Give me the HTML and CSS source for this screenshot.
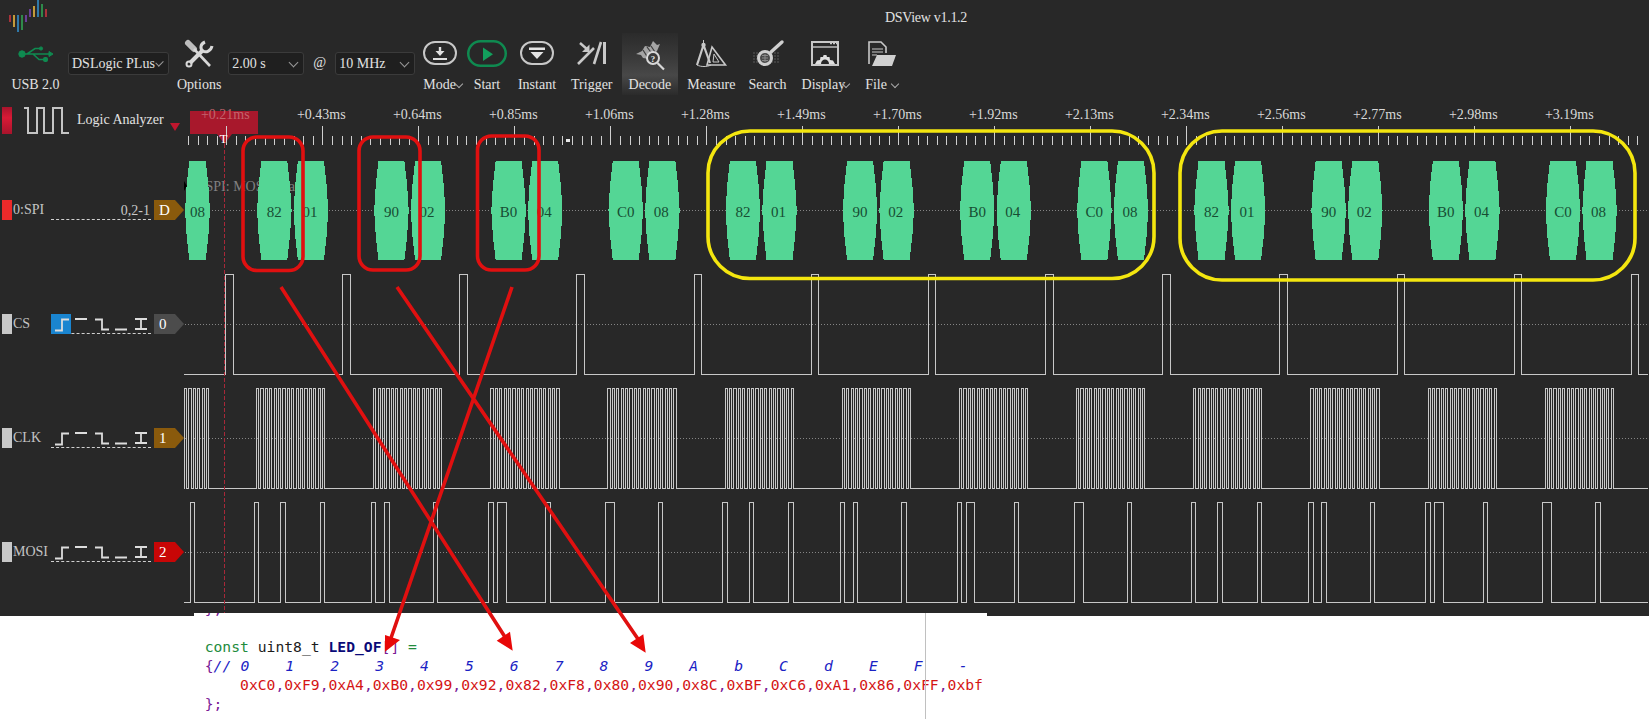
FILE: index.html
```html
<!DOCTYPE html>
<html lang="en">
<head>
	<meta charset="UTF-8">
	<title>DSView v1.1.2</title>
	<link rel="stylesheet" href="styles.css">
</head>
<body>
<svg width="0" height="0" class="defs">
	<symbol id="edges" viewBox="0 0 100 20">
		<path d="M4 16.5H11V5.5H18M24 5H36M44 5.5H51V15.5H58M64 15.5H76M84 5H96M90 5V15M84 15H96"/>
	</symbol>
</svg>

<div class="app">
	<div class="titlebar">
		<svg class="logo" width="40" height="33" viewBox="0 0 40 33">
			<rect x="0" y="15" width="2" height="7" fill="#a8323a"/>
			<rect x="4" y="15" width="2" height="12" fill="#c49a3a"/>
			<rect x="8" y="15" width="2" height="17" fill="#2f78a8"/>
			<rect x="12" y="15" width="2" height="15" fill="#2f8a4a"/>
			<rect x="16" y="15" width="2" height="7" fill="#6a3f98"/>
			<rect x="20" y="9" width="2" height="8" fill="#6a3f98"/>
			<rect x="24" y="6" width="2" height="11" fill="#c49a3a"/>
			<rect x="28" y="0" width="2" height="17" fill="#2f78a8"/>
			<rect x="32" y="4" width="2" height="13" fill="#2f8a4a"/>
			<rect x="36" y="9" width="2" height="8" fill="#a8323a"/>
		</svg>
		<div class="title">DSView v1.1.2</div>
	</div>

	<div class="toolbar">
		<div class="tool tool-usb">
			<svg class="icon" width="36" height="30" viewBox="0 0 36 30">
				<g fill="#0f8a50" stroke="#0f8a50">
					<circle cx="4" cy="14" r="3.2"/>
					<path d="M4 14H32M9 14L17 8.5H22M15 14L21 19.5H27" fill="none" stroke-width="1.6"/>
					<circle cx="23" cy="8.5" r="1.6"/>
					<rect x="25.5" y="17.5" width="4" height="4" rx="1"/>
					<path d="M31 11.5L35 14L31 16.5Z"/>
				</g>
			</svg>
			<span>USB 2.0</span>
		</div>
		<div class="combo combo-device">DSLogic PLus</div>
		<div class="tool tool-options">
			<svg class="icon" width="28" height="30" viewBox="0 0 28 30">
				<path d="M3 3L9 9" stroke="#bdbdbd" stroke-width="6" stroke-linecap="round" fill="none"/>
				<path d="M9 9L25 26" stroke="#d8d8d8" stroke-width="2.6" fill="none"/>
				<path d="M5 23L18 10" stroke="#d8d8d8" stroke-width="4" fill="none"/>
				<circle cx="4" cy="24" r="2.5" fill="none" stroke="#d8d8d8" stroke-width="2"/>
				<path d="M20 2C15 4 15 9 18 11C21 13 26 11 27 6" stroke="#d8d8d8" stroke-width="3" fill="none"/>
			</svg>
			<span>Options</span>
		</div>
		<div class="combo combo-time">2.00 s</div>
		<div class="at">@</div>
		<div class="combo combo-rate">10 MHz</div>

		<div class="tools">
			<div class="tool tool-mode">
				<svg class="icon" width="34" height="30" viewBox="0 0 34 30">
					<rect x="1" y="2" width="32" height="22" rx="11" fill="none" stroke="#c8c8c8" stroke-width="2"/>
					<path d="M17 7V13" stroke="#e0e0e0" stroke-width="2.4"/>
					<path d="M12.5 11H21.5L17 16Z M10 18H24V20H10Z" fill="#e0e0e0"/>
				</svg>
				<span class="more">Mode</span>
			</div>
			<div class="tool tool-start">
				<svg class="icon" width="40" height="30" viewBox="0 0 40 30">
					<rect x="1.25" y="1.25" width="37.5" height="24.5" rx="12.2" fill="none" stroke="#0f8a50" stroke-width="2.5"/>
					<path d="M16 7.5V21L26 14.2Z" fill="#12a05c"/>
				</svg>
				<span>Start</span>
			</div>
			<div class="tool tool-instant">
				<svg class="icon" width="34" height="30" viewBox="0 0 34 30">
					<rect x="1" y="2" width="32" height="22" rx="11" fill="none" stroke="#c8c8c8" stroke-width="2"/>
					<path d="M9 7.5H25V10H9Z M10.5 12H23.5L17 19Z" fill="#e4e4e4"/>
				</svg>
				<span>Instant</span>
			</div>
			<div class="tool tool-trigger">
				<svg class="icon" width="30" height="30" viewBox="0 0 30 30">
					<g stroke="#c8c8c8" fill="none">
						<path d="M3 3L11 10" stroke-width="2.4"/>
						<path d="M1 24L17 8M17 24L24 2" stroke-width="2.6"/>
						<path d="M27.5 2V24" stroke-width="3"/>
					</g>
					<path d="M12.5 4.5V12H5Z" fill="#c8c8c8"/>
				</svg>
				<span>Trigger</span>
			</div>
			<div class="tool tool-active">
				<svg class="icon" width="30" height="30" viewBox="0 0 30 30">
					<path d="M1 14L7 11L10 6L15 7L18 1L22 5L25 4L22 11L14 19L8 18L6 15Z" fill="#a4a4a4"/>
					<path d="M8 10L13 18M12 7L18 15M16 6L20 12" stroke="#3c3c3c" stroke-width="1.2" fill="none"/>
					<circle cx="18" cy="18" r="6" fill="#3a3a3a" stroke="#d8d8d8" stroke-width="2"/>
					<text x="18" y="21.5" class="icon-q">?</text>
					<path d="M22.5 23L29 29.5" stroke="#d8d8d8" stroke-width="2.2"/>
				</svg>
				<span>Decode</span>
			</div>
			<div class="tool">
				<svg class="icon" width="30" height="30" viewBox="0 0 30 30">
					<g fill="none" stroke="#c8c8c8">
						<path d="M16 7L29.5 25H11Z" stroke-width="1.6"/>
						<path d="M18 14L17 22H23Z" stroke-width="1"/>
						<path d="M7.5 5L1 25M7.5 5L14 23" stroke-width="2.2"/>
						<path d="M1 25C5 27 11 27 15 25" stroke-width="1"/>
					</g>
					<path d="M7.5 0V4" stroke="#c8c8c8"/>
					<circle cx="7.5" cy="5" r="2.2" fill="#c8c8c8"/>
				</svg>
				<span>Measure</span>
			</div>
			<div class="tool tool-search">
				<svg class="icon" width="32" height="30" viewBox="0 0 32 30">
					<path d="M1 13H28M1 16H28M1 19H28M1 22H28" stroke="#5a5a5a" stroke-dasharray="2 1"/>
					<circle cx="13" cy="18" r="6.5" fill="#4a4a4a" stroke="#d0d0d0" stroke-width="3"/>
					<path d="M10 15.5H16M10 18H16M10 20.5H16M13 14V22" stroke="#888"/>
					<path d="M19 12L30 2" stroke="#d0d0d0" stroke-width="3.4" stroke-linecap="round"/>
				</svg>
				<span>Search</span>
			</div>
			<div class="tool tool-display">
				<svg class="icon" width="30" height="30" viewBox="0 0 30 30">
					<rect x="2" y="2" width="26" height="23" fill="none" stroke="#c8c8c8" stroke-width="2"/>
					<path d="M2 7H28" stroke="#c8c8c8" stroke-width="1.4"/>
					<path d="M20 3.4H22M23 3.4H25M26 3.4H27" stroke="#c8c8c8" stroke-width="1.6"/>
					<path d="M5 24L7 20.5L10 20L10.5 17H13L13.6 15H16.4L17 17H19.5L20 20L23 20.5L25 24H19C19 18 11 18 11 24Z" fill="#e0e0e0"/>
				</svg>
				<span class="more more-tight">Display</span>
			</div>
			<div class="tool">
				<svg class="icon" width="30" height="30" viewBox="0 0 30 30">
					<path d="M2 24V2H14L19 7V13" fill="none" stroke="#c8c8c8" stroke-width="1.6"/>
					<path d="M5 9H16M5 12H16M5 15H10" stroke="#c8c8c8" stroke-width="1.2"/>
					<path d="M5 26L10 15L29 15L25 26Z" fill="#d0d0d0"/>
				</svg>
				<span class="more more-wide">File</span>
			</div>
		</div>
	</div>

	<div class="viewer">
		<div class="side">
			<div class="side-head">
				<div class="swatch swatch-head"></div>
				<svg class="mode-wave" width="46" height="28" viewBox="0 0 46 28">
					<path d="M0 1H4V26H13V1H20V26H29V1H38V26H45" fill="none" stroke="#c4c4c4" stroke-width="2"/>
				</svg>
				<div class="mode-name">Logic Analyzer</div>
				<div class="mode-arrow"></div>
			</div>

			<div class="row">
				<div class="swatch swatch-red"></div>
				<div class="name">0:SPI</div>
				<div class="trig trig-text">0,2-1</div>
				<div class="tag tag-brown">D</div>
			</div>
			<div class="row">
				<div class="swatch"></div>
				<div class="name">CS</div>
				<div class="trig">
					<div class="trig-on"></div>
					<svg class="edges"><use href="#edges"/></svg>
				</div>
				<div class="tag tag-gray">0</div>
			</div>
			<div class="row">
				<div class="swatch"></div>
				<div class="name">CLK</div>
				<div class="trig"><svg class="edges"><use href="#edges"/></svg></div>
				<div class="tag tag-brown">1</div>
			</div>
			<div class="row">
				<div class="swatch"></div>
				<div class="name">MOSI</div>
				<div class="trig"><svg class="edges"><use href="#edges"/></svg></div>
				<div class="tag tag-red">2</div>
			</div>
		</div>

		<svg id="scope" class="scope" width="1465" height="513" viewBox="184 100 1465 513"></svg>
	</div>
</div>

<div class="lower">
	<div class="snippet">
<pre class="code"><span class="op">};</span>

<span class="kw">const</span> uint8_t <b class="id">LED_OF</b><span class="op">[]</span> <span class="kw">=</span>
<span class="op">{</span><i class="cm">// 0    1    2    3    4    5    6    7    8    9    A    b    C    d    E    F    -</i>
    <span class="num">0xC0</span><span class="op">,</span><span class="num">0xF9</span><span class="op">,</span><span class="num">0xA4</span><span class="op">,</span><span class="num">0xB0</span><span class="op">,</span><span class="num">0x99</span><span class="op">,</span><span class="num">0x92</span><span class="op">,</span><span class="num">0x82</span><span class="op">,</span><span class="num">0xF8</span><span class="op">,</span><span class="num">0x80</span><span class="op">,</span><span class="num">0x90</span><span class="op">,</span><span class="num">0x8C</span><span class="op">,</span><span class="num">0xBF</span><span class="op">,</span><span class="num">0xC6</span><span class="op">,</span><span class="num">0xA1</span><span class="op">,</span><span class="num">0x86</span><span class="op">,</span><span class="num">0xFF</span><span class="op">,</span><span class="num">0xbf</span>
<span class="op">};</span></pre>
		<div class="guide"></div>
	</div>
</div>

<!-- hand drawn notes on top of the screenshot -->
<svg class="marks" width="1649" height="719" viewBox="0 0 1649 719">
	<g class="note-red">
		<rect x="243" y="137" width="60" height="133.5" rx="14"/>
		<rect x="359" y="137" width="61" height="133" rx="14"/>
		<rect x="477.5" y="136" width="61.5" height="134" rx="14"/>
		<path d="M281 287L505 637M397 287L638 639M512 287L391 638"/>
	</g>
	<path class="head" d="M512.7 650.7L496.7 640.7L510 631.7Z M645.7 652.7L630 643L643.3 634.3Z M385 651.7L385 635L400 640Z"/>
	<g class="note-yellow">
		<rect x="708" y="131" width="446" height="147.5" rx="42"/>
		<rect x="1180" y="131" width="455" height="149" rx="42"/>
	</g>
</svg>

<script src="wave.js"></script>
</body>
</html>
```

FILE: styles.css
```css
*{ margin:0; padding:0; box-sizing:border-box; }
html,body{ height:719px; overflow:hidden; background:#fff; }
body{ position:relative; font-family:"Liberation Serif","Noto Sans CJK TC",serif; font-size:14px; color:#e2e2e2; }
.defs{ position:absolute; }

.app{ height:616px; padding-bottom:3px; background:#282828; }

.titlebar{ display:flex; height:35px; }
.logo{ margin-left:9px; }
.title{ margin-left:836px; padding-top:9px; line-height:17px; letter-spacing:-0.3px; }

.toolbar{ display:flex; height:65px; padding-left:11px; }
.tool{ display:flex; flex-direction:column; align-items:center; padding-top:5px; white-space:nowrap; }
.icon{ display:block; overflow:visible; }
.tool span{ margin-top:7px; line-height:16px; }
.tool .more::after{ content:""; display:inline-block; width:5px; height:5px; margin:0 0 2px 0; border-right:1px solid #aaa; border-bottom:1px solid #aaa; transform:rotate(45deg); }
.tool .more-tight::after{ margin-left:-2px; }
.tool .more-wide::after{ margin-left:5px; }
.tool-usb{ width:49px; }
.tool-options{ margin-left:8px; }
.tool-mode{ align-items:flex-start; }
.tool-start{ width:28px; margin-left:-5px; }
.tool-start .icon{ margin:0 -6px; flex:none; }
.tool-instant{ margin-left:1px; }
.tool-trigger{ margin-left:-1px; }
.tool-active{ height:62px; margin:-2px -7px 0; padding:7px 7px 0; background:linear-gradient(#2b2b2b,#3a3a3a 40%,#484848 68%,#2b2b2b); }
.tool-search{ margin-left:-3px; }
.tool-display{ margin-left:-1px; }
.icon-q{ font-size:9px; font-weight:bold; text-anchor:middle; fill:#e8e8e8; }

.tools{ display:flex; gap:16px; margin-left:8px; }

.combo{ display:flex; align-items:center; justify-content:space-between; height:23px; margin:17px 0 0 8px; padding:0 6px 0 3px; background:#1f1f1f; border:1px solid #3b3b3b; border-radius:3px; white-space:nowrap; }
.combo::after{ content:""; width:6px; height:6px; margin:-3px 0 0 2px; border-right:1px solid #999; border-bottom:1px solid #999; transform:rotate(45deg); }
.combo-device{ width:101px; margin-left:8px; }
.combo-time{ width:76px; margin-left:7px; }
.combo-rate{ width:80px; margin-left:9px; }
.combo-rate + .tools{ margin-left:8px; }
.at{ margin:20px 0 0 9px; line-height:16px; }

.viewer{ display:flex; height:513px; }
.side{ flex:none; width:184px; }
.side-head{ display:flex; height:53px; padding-top:7px; }
.swatch{ flex:none; width:10px; height:20px; margin-left:2px; background:#c8c8c8; }
.swatch-head{ height:27px; background:linear-gradient(#a8142c,#d81a36 40%,#a8142c); }
.swatch-red{ background:#ec2a2a; }
.mode-wave{ margin-left:12px; }
.mode-name{ margin-left:7px; padding-top:5px; line-height:16px; white-space:nowrap; }
.mode-arrow{ width:0; height:0; margin:16px 0 0 6px; border-style:solid; border-width:8px 5.5px 0; border-color:#c0172e transparent transparent; }

.row{ display:flex; align-items:center; height:114px; }
.name{ flex:none; width:39px; padding-left:1px; color:#c4c4c4; }
.trig{ position:relative; flex:none; width:100px; height:20px; border-bottom:1px dashed #d0d0d0; }
.trig-text{ padding-right:1px; line-height:21px; text-align:right; color:#c8c8c8; }
.trig-on{ position:absolute; left:0; top:0; width:20px; height:20px; background:#1a85d0; }
.edges{ position:absolute; left:0; top:0; width:100px; height:20px; fill:none; stroke:#dcdcdc; stroke-width:1.8; }
.tag{ flex:none; width:30px; height:20px; margin-left:3px; padding-left:5px; line-height:20px; font-size:15px; color:#fff; clip-path:polygon(0 0,21px 0,100% 50%,21px 100%,0 100%); }
.tag-brown{ background:#8a5a0c; }
.tag-gray{ background:#4c4c4c; }
.tag-red{ background:#c80606; }

.scope{ flex:none; display:block; font-family:"Liberation Serif",serif; font-size:14px; }
.tick{ stroke:#cfcfcf; fill:none; shape-rendering:crispEdges; }
.tick-label{ fill:#d8d8d8; text-anchor:middle; }
.flag{ fill:#a8182c; }
.flag-label{ fill:#c4646c; text-anchor:middle; }
.flag-t{ fill:#fff; text-anchor:middle; font-size:13px; }
.center{ stroke:#858585; stroke-dasharray:1 2; shape-rendering:crispEdges; }
.wave{ fill:none; stroke:#c8c8c8; shape-rendering:crispEdges; }
.cursor{ stroke:#a82838; stroke-dasharray:4 2; shape-rendering:crispEdges; }
.ghost{ fill:#808080; font-size:14px; text-anchor:end; }
.block{ fill:#54d695; shape-rendering:crispEdges; }
.block-label{ fill:#174d33; font-size:15px; text-anchor:middle; }

.lower{ height:103px; background:#fff; }
.snippet{ position:relative; top:-3px; width:793px; height:106px; margin-left:194px; overflow:hidden; background:#fff; }
.code{ margin-top:-14px; padding-left:10.7px; font-family:"DejaVu Sans Mono",monospace; font-size:14.7px; line-height:19px; color:#1c1c1c; }
.kw{ color:#228b3c; }
.id{ color:#0a0a78; }
.op{ color:#7a1a96; }
.cm{ color:#1a22c4; letter-spacing:0.135px; }
.num{ color:#d41414; }
.guide{ position:absolute; left:731px; top:0; width:1px; height:106px; background:#c0c0c0; }

.marks{ position:absolute; left:0; top:0; fill:none; }
.note-red{ stroke:#e01010; stroke-width:3.6; }
.head{ fill:#e80808; }
.note-yellow{ stroke:#f4e60f; stroke-width:3.6; }
```

FILE: wave.js
```js
var NS='http://www.w3.org/2000/svg';
var scope=document.getElementById('scope');

var TICK0=226.3, TICK_STEP=96;
var PERIOD=117.15;
var BURST0=256, BIT=4.4;
var BYTES=[[0x82,0x01],[0x90,0x02],[0xB0,0x04],[0xC0,0x08]];

function add(tag,attrs,text){
	var el=document.createElementNS(NS,tag);
	for(var k in attrs){
		el.setAttribute(k,attrs[k]);
	}
	if(text) el.textContent=text;
	scope.appendChild(el);
	return el;
}

function px(x){
	return Math.round(x)+0.5;
}

function hex(n){
	var s=n.toString(16).toUpperCase();
	return s.length<2 ? '0'+s : s;
}

function ruler(){
	var labels=['0.21','0.43','0.64','0.85','1.06','1.28','1.49','1.70','1.92','2.13','2.34','2.56','2.77','2.98','3.19'];
	var d='';
	for(var x=TICK0-4*9.6;x<1645;x+=9.6){
		d+='M'+px(x)+' 136V145';
	}
	for(var i=0;i<labels.length;i++){
		d+='M'+px(TICK0+i*TICK_STEP)+' 126V136';
	}
	add('rect',{'class':'flag',x:190,y:111,width:68,height:23});
	add('path',{'class':'flag',d:'M217 134H232L224.5 144Z'});
	add('path',{'class':'tick',d:d});
	add('rect',{x:566,y:139,width:4,height:3,fill:'#e8e8e8'});
	for(var j=0;j<labels.length;j++){
		add('text',{
			'class':j==0 ? 'flag-label' : 'tick-label',
			x:TICK0+j*TICK_STEP-1,
			y:119
		},'+'+labels[j]+'ms');
	}
	add('text',{'class':'flag-t',x:223.5,y:143},'T');
}

function block(x,w,label,nudge){
	var pts=[[4.3,161],[1.6,185],[0,210.5],[1.6,236],[4.3,260]];
	var d='M'+(x+pts[0][0])+' '+pts[0][1];
	for(var i=1;i<pts.length;i++) d+='L'+(x+pts[i][0])+' '+pts[i][1];
	for(var j=pts.length-1;j>=0;j--) d+='L'+(x+w-pts[j][0])+' '+pts[j][1];
	add('path',{'class':'block',d:d+'Z'});
	add('text',{'class':'block-label',x:x+w/2+(nudge||0),y:217},label);
}

function spi(){
	add('path',{d:'M184 181L187 186L184 191Z',fill:'#000'});
	add('text',{'class':'ghost',x:295,y:191},'0:SPI: MOSI data');
	block(185,25,'08');
	for(var n=0;n<12;n++){
		var pair=BYTES[n%4];
		var x=257+n*PERIOD;
		block(x,34.6,hex(pair[0]));
		block(x+36.6,34.6,hex(pair[1]),-1);
	}
}

function cs(){
	var d='M184 374.5';
	for(var n=0;n<13;n++){
		var up=px(225+n*PERIOD);
		var down=px(232.5+n*PERIOD);
		d+='H'+up+'V274.5H'+down+'V374.5';
	}
	add('path',{'class':'wave',d:d+'H1648'});
}

function burst(start,pulses,d){
	for(var i=0;i<pulses;i++){
		var x=start+i*BIT;
		d+='H'+px(x)+'V388.5H'+px(x+BIT/2)+'V488.5';
	}
	return d;
}

function clk(){
	var d=burst(184,6,'M184 488.5');
	for(var n=0;n<12;n++){
		d=burst(BURST0+n*PERIOD,16,d);
	}
	add('path',{'class':'wave',d:d+'H1648'});
}

function mosi(){
	// one level per bit, the line moves half a clock before the sample
	var d='M184 602.5';
	var pulse=function(bit,start){
		return start+bit*BIT-BIT/2;
	};
	var runs=[[189.5,193.9]];
	for(var n=0;n<12;n++){
		var pair=BYTES[n%4];
		var word=pair[0]*256+pair[1];
		var start=BURST0+n*PERIOD;
		var bit=0;
		while(bit<16){
			if(word&(0x8000>>bit)){
				var end=bit;
				while(end<15 && (word&(0x8000>>(end+1)))) end++;
				runs.push([pulse(bit,start),pulse(end+1,start)]);
				bit=end;
			}
			bit++;
		}
	}
	for(var i=0;i<runs.length;i++){
		d+='H'+px(runs[i][0])+'V502.5H'+px(runs[i][1])+'V602.5';
	}
	add('path',{'class':'wave',d:d+'H1648'});
}

ruler();
add('path',{'class':'center',d:'M185 210.5H1649M185 324.5H1649M185 438.5H1649M185 552.5H1649'});
spi();
cs();
clk();
mosi();
add('path',{'class':'cursor',d:'M224.5 144V613'});
```
